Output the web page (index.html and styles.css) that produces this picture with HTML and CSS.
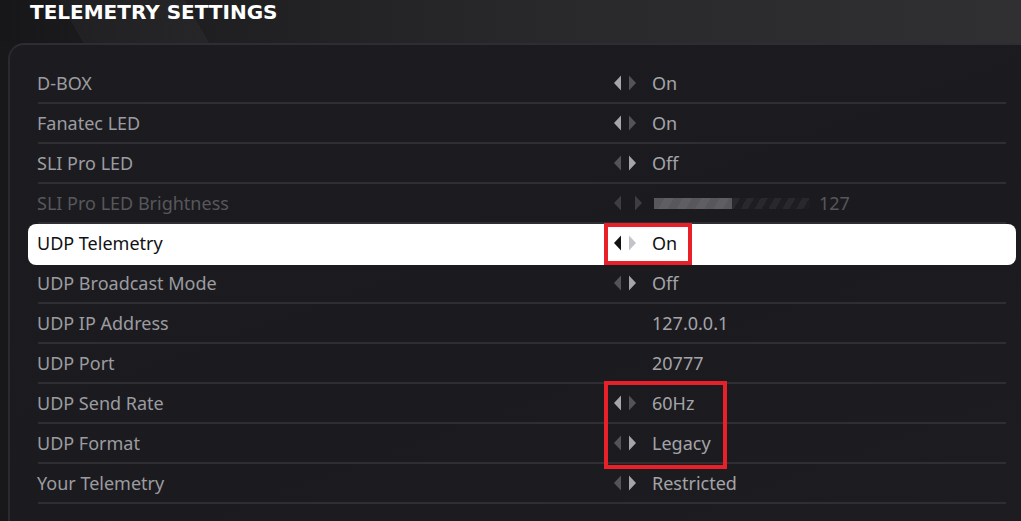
FILE: index.html
```html
<!DOCTYPE html>
<html>
<head>
<meta charset="utf-8">
<link rel="stylesheet" href="styles.css">
</head>
<body>
<div class="page">
  <header class="header"><h1 class="title">TELEMETRY SETTINGS</h1></header>
  <section class="panel">
    <div class="list">
      <div class="row"><div class="inner"><span class="label">D-BOX</span><div class="ctrl"><svg class="arrows" viewBox="0 0 23 16" width="23" height="16"><polygon class="on" points="0,8 7,0.5 7,15.5"/><polygon class="off" points="15,0.5 22,8 15,15.5"/></svg><span class="value">On</span></div></div></div>
      <div class="row"><div class="inner"><span class="label">Fanatec LED</span><div class="ctrl"><svg class="arrows" viewBox="0 0 23 16" width="23" height="16"><polygon class="on" points="0,8 7,0.5 7,15.5"/><polygon class="off" points="15,0.5 22,8 15,15.5"/></svg><span class="value">On</span></div></div></div>
      <div class="row"><div class="inner"><span class="label">SLI Pro LED</span><div class="ctrl"><svg class="arrows" viewBox="0 0 23 16" width="23" height="16"><polygon class="off" points="0,8 7,0.5 7,15.5"/><polygon class="on" points="15,0.5 22,8 15,15.5"/></svg><span class="value">Off</span></div></div></div>
      <div class="row disabled"><div class="inner"><span class="label">SLI Pro LED Brightness</span><div class="ctrl"><svg class="arrows wide" viewBox="0 0 29 16" width="29" height="16"><polygon class="off" points="0,8 7,0.5 7,15.5"/><polygon class="off" points="21,0.5 28,8 21,15.5"/></svg><div class="bar"><div class="fill" style="width:50%"></div></div><span class="num">127</span></div></div></div>
      <div class="row active"><div class="inner"><span class="label">UDP Telemetry</span><div class="ctrl"><svg class="arrows" viewBox="0 0 23 16" width="23" height="16"><polygon class="on" points="0,8 7,0.5 7,15.5"/><polygon class="off" points="15,0.5 22,8 15,15.5"/></svg><span class="value">On</span></div></div></div>
      <div class="row"><div class="inner"><span class="label">UDP Broadcast Mode</span><div class="ctrl"><svg class="arrows" viewBox="0 0 23 16" width="23" height="16"><polygon class="off" points="0,8 7,0.5 7,15.5"/><polygon class="on" points="15,0.5 22,8 15,15.5"/></svg><span class="value">Off</span></div></div></div>
      <div class="row"><div class="inner"><span class="label">UDP IP Address</span><div class="ctrl"><span class="spacer"></span><span class="value">127.0.0.1</span></div></div></div>
      <div class="row"><div class="inner"><span class="label">UDP Port</span><div class="ctrl"><span class="spacer"></span><span class="value">20777</span></div></div></div>
      <div class="row"><div class="inner"><span class="label">UDP Send Rate</span><div class="ctrl"><svg class="arrows" viewBox="0 0 23 16" width="23" height="16"><polygon class="on" points="0,8 7,0.5 7,15.5"/><polygon class="off" points="15,0.5 22,8 15,15.5"/></svg><span class="value">60Hz</span></div></div></div>
      <div class="row"><div class="inner"><span class="label">UDP Format</span><div class="ctrl"><svg class="arrows" viewBox="0 0 23 16" width="23" height="16"><polygon class="off" points="0,8 7,0.5 7,15.5"/><polygon class="on" points="15,0.5 22,8 15,15.5"/></svg><span class="value">Legacy</span></div></div></div>
      <div class="row"><div class="inner"><span class="label">Your Telemetry</span><div class="ctrl"><svg class="arrows" viewBox="0 0 23 16" width="23" height="16"><polygon class="off" points="0,8 7,0.5 7,15.5"/><polygon class="on" points="15,0.5 22,8 15,15.5"/></svg><span class="value">Restricted</span></div></div></div>
    </div>
  </section>
  <div class="mark mark-one"></div>
  <div class="mark mark-two"></div>
</div>
</body>
</html>
```

FILE: styles.css
```css
* { box-sizing: border-box; }
html, body { margin: 0; padding: 0; }
body {
  width: 1021px;
  height: 521px;
  overflow: hidden;
  background: #151517;
  font-family: "Noto Sans", "Open Sans", sans-serif;
}
.page {
  position: relative;
  width: 1021px;
  height: 521px;
  background:
    linear-gradient(115deg, rgba(255,255,255,0) 0%, rgba(255,255,255,0) 55%, rgba(255,255,255,0.05) 100%),
    linear-gradient(90deg, #18181a 0%, #222224 40%, #2c2c2f 100%);
}
.header {
  height: 43px;
  padding-left: 30px;
  background:
    linear-gradient(60deg, rgba(255,255,255,0) 0 8%, rgba(255,255,255,0.03) 8% 20%, rgba(255,255,255,0) 20%),
    linear-gradient(90deg, #171719 0%, #1f1f21 20%, #29292c 55%, #303033 100%);
}
.title {
  margin: 0;
  font-family: "DejaVu Sans", sans-serif;
  font-weight: bold;
  font-size: 20px;
  line-height: 25px;
  color: #ffffff;
  letter-spacing: 0;
}
.panel {
  margin-left: 8px;
  height: 478px;
  border-top: 2px solid #2d2d32;
  border-left: 2px solid #2a2a2f;
  border-top-left-radius: 16px;
  background: linear-gradient(160deg, #1c1c20 0%, #1b1b1f 60%, #1d1d21 100%);
  padding-top: 19px;
  padding-left: 18px;
}
.list {
  width: 988px;
}
.row {
  height: 40px;
  border-radius: 8px;
}
.row.active { height: 41px; margin-bottom: -1px; }
.inner {
  height: 40px;
  margin: 0 10px;
  border-bottom: 2px solid #2e2e33;
  display: flex;
  align-items: center;
  padding-top: 0;
}
.label {
  width: 576px;
  margin-left: -1px;
  margin-right: 1px;
  font-size: 18px;
  color: #9c9ca0;
  white-space: nowrap;
}
.ctrl {
  display: flex;
  align-items: center;
}
.arrows { display: block; margin-right: 15px; }
.arrows.wide { margin-right: 11px; }
.arrows .on { fill: #a6a6aa; }
.arrows .off { fill: #545458; }
.spacer { width: 38px; }
.value {
  font-size: 18px;
  color: #a4a4a8;
}
.disabled .label, .disabled .num { color: #57575b; }
.disabled .arrows .off { fill: #3e3e42; }
.bar {
  width: 156px;
  height: 11px;
  background: repeating-linear-gradient(-60deg, #1e1e22 0 6px, #29292d 6px 12px);
  display: flex;
}
.fill {
  height: 11px;
  background: repeating-linear-gradient(-60deg, #58585c 0 8px, #5f5f63 8px 16px);
}
.num {
  margin-left: 9px;
  font-size: 18px;
}
.row.active { background: #ffffff; }
.row.active .inner { border-bottom-color: transparent; }
.row.active .label, .row.active .value { color: #111114; }
.row.active .arrows .on { fill: #111114; }
.row.active .arrows .off { fill: #c4c4c8; }
.mark {
  position: absolute;
  border: 4px solid #e8202a;
}
.mark-one { left: 604px; top: 223px; width: 88px; height: 42px; }
.mark-two { left: 604px; top: 381px; width: 123px; height: 88px; }
```
